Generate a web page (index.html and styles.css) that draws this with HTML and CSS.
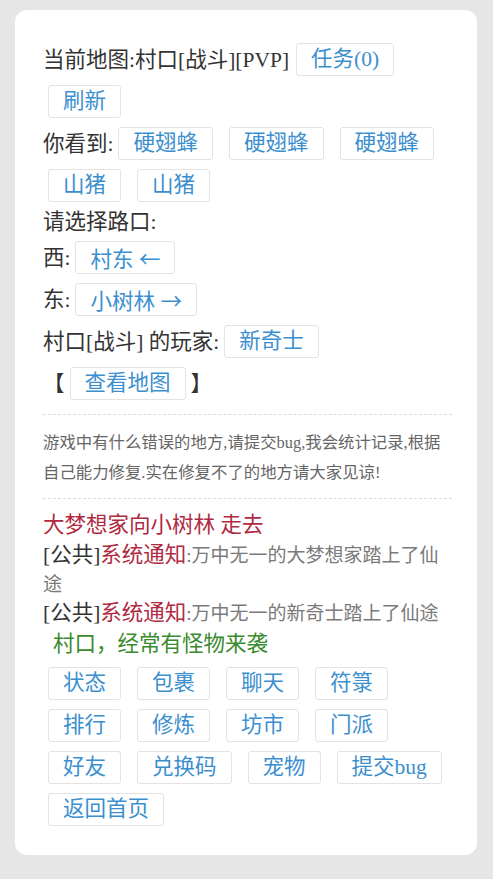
FILE: index.html
```html
<!DOCTYPE html>
<html lang="zh">
<head>
<meta charset="utf-8">
<title>村口</title>
<link rel="stylesheet" href="styles.css">
</head>
<body>
<div class="card">
  <div class="row">
    <span class="txt lead">当前地图:村口[战斗][PVP]</span>
    <a class="btn">任务(0)</a>
    <a class="btn">刷新</a>
  </div>
  <div class="row">
    <span class="txt">你看到:</span>
    <a class="btn">硬翅蜂</a>
    <a class="btn">硬翅蜂</a>
    <a class="btn">硬翅蜂</a>
    <a class="btn">山猪</a>
    <a class="btn">山猪</a>
  </div>
  <div class="line">请选择路口:</div>
  <div class="row">
    <span class="txt">西:</span>
    <a class="btn">村东 <span class="arr">←</span></a>
  </div>
  <div class="row">
    <span class="txt">东:</span>
    <a class="btn">小树林 <span class="arr">→</span></a>
  </div>
  <div class="row">
    <span class="txt">村口[战斗] 的玩家:</span>
    <a class="btn">新奇士</a>
  </div>
  <div class="row">
    <span class="txt">【</span>
    <a class="btn tight">查看地图</a>
    <span class="txt">】</span>
  </div>
  <div class="sep"></div>
  <div class="notice">游戏中有什么错误的地方,请提交bug,我会统计记录,根据自己能力修复.实在修复不了的地方请大家见谅!</div>
  <div class="sep sep-b"></div>
  <div class="walk">大梦想家向小树林 走去</div>
  <div class="msg">[公共]<span class="red">系统通知</span><span class="grey">:万中无一的大梦想家踏上了仙途</span></div>
  <div class="msg">[公共]<span class="red">系统通知</span><span class="grey">:万中无一的新奇士踏上了仙途</span></div>
  <div class="msg green">村口，经常有怪物来袭</div>
  <div class="row menu">
    <a class="btn">状态</a>
    <a class="btn">包裹</a>
    <a class="btn">聊天</a>
    <a class="btn">符箓</a>
    <a class="btn">排行</a>
    <a class="btn">修炼</a>
    <a class="btn">坊市</a>
    <a class="btn">门派</a>
    <a class="btn">好友</a>
    <a class="btn">兑换码</a>
    <a class="btn">宠物</a>
    <a class="btn">提交bug</a>
    <a class="btn">返回首页</a>
  </div>
</div>
</body>
</html>
```
FILE: styles.css
```css
html, body {
  margin: 0;
  padding: 0;
  background: #e6e6e6;
}
body {
  font-family: "Liberation Serif", "Noto Sans CJK SC", serif;
  font-size: 21.5px;
  color: #333;
}
.card {
  box-sizing: border-box;
  width: 462px;
  margin: 10px 0 0 15px;
  padding: 28.5px 22px 24.5px 28px;
  background: #fff;
  border-radius: 12px;
}
.row {
  display: flex;
  flex-wrap: wrap;
  align-items: center;
}
.txt {
  line-height: 30px;
}
.lead {
  margin-right: 2px;
}
.line {
  line-height: 30px;
}
.btn {
  box-sizing: border-box;
  display: block;
  height: 33px;
  line-height: 31px;
  padding: 0 14px;
  margin: 4.5px 11px 4.5px 5px;
  border: 1px solid #e3e3e3;
  border-radius: 3px;
  background: #fff;
  color: #3b8fcf;
  white-space: nowrap;
}
.btn.tight {
  margin-right: 5px;
}
.arr {
  font-family: "Noto Sans CJK SC", sans-serif;
}
.sep {
  margin: 9px 3px 13.5px 0;
  border-top: 1px dashed #dcdcdc;
}
.sep-b {
  margin-top: 11px;
  margin-bottom: 11px;
}
.notice {
  font-size: 16.4px;
  line-height: 29.5px;
  color: #666;
  margin-right: 3px;
}
.walk {
  color: #b02a42;
  line-height: 31px;
}
.msg {
  line-height: 29px;
}
.red {
  color: #b02a42;
}
.grey {
  font-size: 19px;
  color: #7a7a7a;
}
.green {
  color: #3a8a2e;
  padding-left: 10px;
  line-height: 32px;
}
.menu {
  margin-top: 2px;
}
```
